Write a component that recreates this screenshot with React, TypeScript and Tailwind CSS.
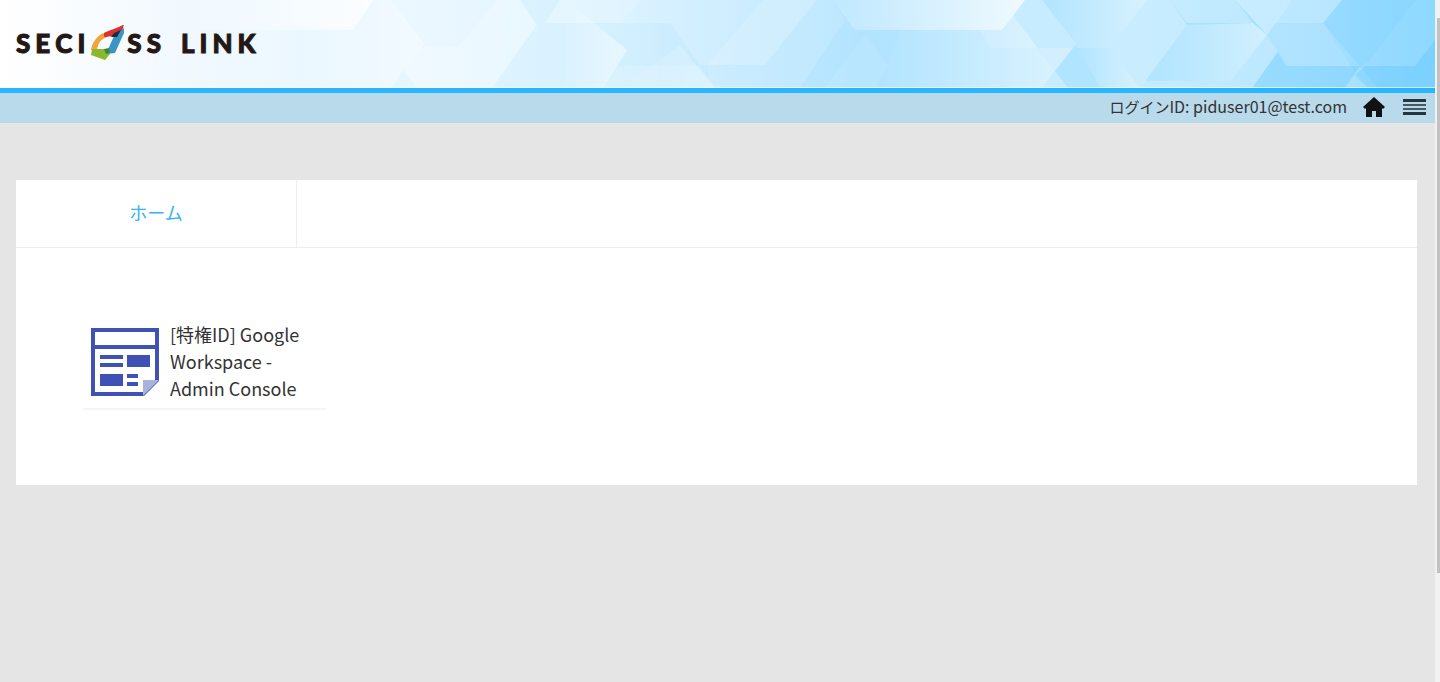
const NAV_LINK = 'flex items-center justify-center text-black';

function HeaderPattern() {
    return (
        <svg className="absolute inset-0 w-full h-full" viewBox="0 0 1435 88" preserveAspectRatio="none" aria-hidden="true">
            <defs>
                <linearGradient id="sky" x1="0" x2="1">
                    <stop offset="0" stopColor="#ffffff" />
                    <stop offset="0.12" stopColor="#f2f9ff" />
                    <stop offset="0.28" stopColor="#e6f6ff" />
                    <stop offset="0.43" stopColor="#d4f0ff" />
                    <stop offset="0.52" stopColor="#c0e8ff" />
                    <stop offset="0.6" stopColor="#b3e4ff" />
                    <stop offset="0.8" stopColor="#b0e4ff" />
                    <stop offset="0.92" stopColor="#a0deff" />
                    <stop offset="1" stopColor="#8ed8ff" />
                </linearGradient>
                <linearGradient id="fade" x1="0" x2="1">
                    <stop offset="0" stopColor="#fff" stopOpacity="0.15" />
                    <stop offset="1" stopColor="#fff" stopOpacity="0.8" />
                </linearGradient>
                <linearGradient id="soft" x1="0" x2="1">
                    <stop offset="0" stopColor="#fff" stopOpacity="0" />
                    <stop offset="1" stopColor="#fff" stopOpacity="0.5" />
                </linearGradient>
            </defs>
            <rect width="1435" height="88" fill="url(#sky)" />
            <g fill="#fff">
                <path d="M200 0H373L353 30H200Z" fill="url(#fade)" />
                <path d="M300 0H390L424 44L403 70L392 88H300Z" fill="url(#soft)" />
                <path d="M390 0H497L458 47H424Z" opacity="0.25" />
                <path d="M497 0H520L537 25L492 88H417L403 70L420 47H458Z" opacity="0.4" />
                <path d="M565 0L627 50L603 88H560Z" fill="url(#soft)" />
                <path d="M560 0H642L620 23H545Z" opacity="0.3" />
                <path d="M642 0H692L670 23H620Z" opacity="0.2" />
                <path d="M670 23L715 88H600L616 66H700Z" opacity="0.15" />
                <path d="M670 23L692 0H763L707 65H700Z" opacity="0.2" />
                <path d="M680 45L715 88H620Z" fill="url(#soft)" opacity="0.6" />
                <path d="M763 0H817L765 65H707Z" opacity="0.3" />
                <path d="M817 0H832L845 20L800 88H710L707 65H765Z" opacity="0.13" />
                <path d="M832 0H1025L1002 30H855Z" fill="url(#fade)" />
                <path d="M865 35L888 65L875 88H825Z" opacity="0.08" />
                <path d="M900 30H1002L1013 15L1055 71L1042 88H880Z" fill="url(#soft)" />
                <path d="M980 30H1002L1013 15L1038 48H990Z" opacity="0.15" />
                <path d="M1042 0L1076 44L1055 71L1038 48H1076L1038 48L1013 15L1025 0Z" opacity="0.3" />
                <path d="M1038 48H1073L1055 71Z" opacity="0.2" />
                <path d="M1055 71L1042 88H1068Z" opacity="0.3" />
                <path d="M1042 0H1147L1110 48H1078Z" fill="url(#soft)" />
                <path d="M1078 48H1110L1140 88H1100Z" fill="url(#soft)" />
                <path d="M1147 0H1170L1187 25L1140 88L1110 48Z" opacity="0.32" />
                <path d="M1187 25L1253 23L1267 35L1231 81H1145Z" fill="url(#soft)" />
                <path d="M1170 0H1235L1253 23H1187Z" opacity="0.28" />
                <path d="M1267 35L1278 52L1252 88H1140L1145 81H1231Z" opacity="0.28" />
                <path d="M1235 0H1292L1267 35Z" opacity="0.38" />
                <path d="M1292 0H1342L1323 23H1275Z" opacity="0.28" />
                <path d="M1323 23L1378 88H1345L1360 66H1285L1278 52L1267 35L1275 23Z" opacity="0.14" />
            </g>
            <g fill="#45bcff">
                <path d="M1278 52L1288 66H1360L1345 88H1252Z" opacity="0.14" />
                <path d="M1342 0H1416L1370 60L1355 72L1323 23Z" opacity="0.08" />
                <path d="M1365 66H1415L1435 40V88H1368L1355 75Z" opacity="0.25" />
            </g>
            <path d="M0 87H1435V88H0Z" fill="#fff" opacity="0.6" />
        </svg>
    );
}

function LogoLetters({ text }: { text: string }) {
    return (
        <span className="flex gap-[5px]">
            {text.split('').map((letter, i) => (
                <span key={i}>{letter}</span>
            ))}
        </span>
    );
}

function Logo() {
    return (
        <a href="#" aria-label="SECIOSS LINK" className="relative flex items-center pb-[2px] text-[26px] leading-8 font-black text-[#231815] font-[Lato,sans-serif] [-webkit-text-stroke:1px_#231815]">
            <LogoLetters text="SECI" />
            <svg className="w-9 h-9 ml-1 mr-[2px]" viewBox="0 0 36 36" aria-hidden="true">
                <path d="M35 -1L33 7L26 12C21 10 16 13 12 14L15 8C20 5 28 4 35 -1Z" fill="#d8322f" />
                <path d="M14 8L16 13C11 15 9 19 8 25L2 25C3 18 7 12 14 8Z" fill="#f0a63a" />
                <path d="M35 3L35 8L26 28L17 29L25 11Z" fill="#3b94c6" />
                <path d="M32 5L28 12L22 12L25 8Z" fill="#222b35" />
                <path d="M3 24L20 24L21 29L16 35L2 30Z" fill="#8cb82b" />
                <path d="M15 24L20 23L21 28L17 29Z" fill="#3a8441" />
            </svg>
            <LogoLetters text="SS" />
            <span className="ml-5">
                <LogoLetters text="LINK" />
            </span>
        </a>
    );
}

function AppIcon() {
    return (
        <svg className="w-[70px] h-[70px] shrink-0" viewBox="0 0 70 70" aria-hidden="true">
            <path d="M1 1H69V54L54 69H1Z" fill="#3f51b5" />
            <path d="M5 5H65V18H5ZM5 22H65V53L53 65H5Z" fill="#fff" />
            <path d="M53 53H69L53 69Z" fill="#a9b1dd" />
            <path d="M10 28H33V32H10ZM10 36H33V40H10ZM37 28H60V40H37ZM10 47H33V59H10ZM37 47H48V51H37ZM37 55H48V59H37Z" fill="#3f51b5" />
        </svg>
    );
}

export default function App() {
    return (
        <div className="flex min-h-screen bg-[#e5e5e5] text-[#333] font-['Noto_Sans_CJK_JP',sans-serif]">
            <div className="flex-1 min-w-0">
                <header className="relative flex h-[93px] items-center border-b-[5px] border-[#29b6ff] px-4">
                    <HeaderPattern />
                    <Logo />
                </header>

                <nav className="flex h-[30px] items-center justify-end bg-[#b8daea] px-2 pb-[3px]">
                    <span className="mr-4 text-base leading-6 whitespace-nowrap">
                        <span className="text-[15px]">ログイン</span>ID: piduser01@test.com
                    </span>
                    <a href="#" aria-label="Home" className={NAV_LINK}>
                        <svg className="w-[22px] h-5" viewBox="0 0 22 20" aria-hidden="true">
                            <path d="M11 0L22 10L20 12L19 11V20H13V14H9V20H3V11L2 12L0 10Z" fill="#111" />
                        </svg>
                    </a>
                    <button type="button" aria-label="Menu" className="ml-[18px] flex items-center justify-center">
                        <svg className="w-6 h-4" viewBox="0 0 24 16" aria-hidden="true">
                            <path d="M0 0H23V3H0ZM0 13H23V16H0Z" fill="#263640" />
                            <path d="M0 5H23V7H0ZM0 9H23V11H0Z" fill="#465963" />
                        </svg>
                    </button>
                </nav>

                <main className="px-4 pt-[57px]">
                    <section className="mr-[2px] bg-white">
                        <div className="flex h-[68px] border-b border-[#eee]">
                            <button type="button" className="w-[281px] border-r border-[#eee] pb-1 text-lg text-[#36b4f5]">
                                ホーム
                            </button>
                        </div>
                        <div className="px-[67px] pt-[73px] pb-[75px]">
                            <a href="#" className="flex w-[243px] items-center gap-[10px] border-b-2 border-[#f5f5f5] pb-[6px] pl-[7px]">
                                <AppIcon />
                                <span className="w-[140px] text-lg leading-[27px]">
                                    [特権ID] Google Workspace - Admin Console
                                </span>
                            </a>
                        </div>
                    </section>
                </main>
            </div>

            {/* Scroll track */}
            <div className="flex w-[5px] flex-col items-end bg-[#f1f1f1] pt-[18px]">
                <div className="h-[555px] w-[3px] bg-[#c1c1c1]" />
            </div>
        </div>
    );
}
